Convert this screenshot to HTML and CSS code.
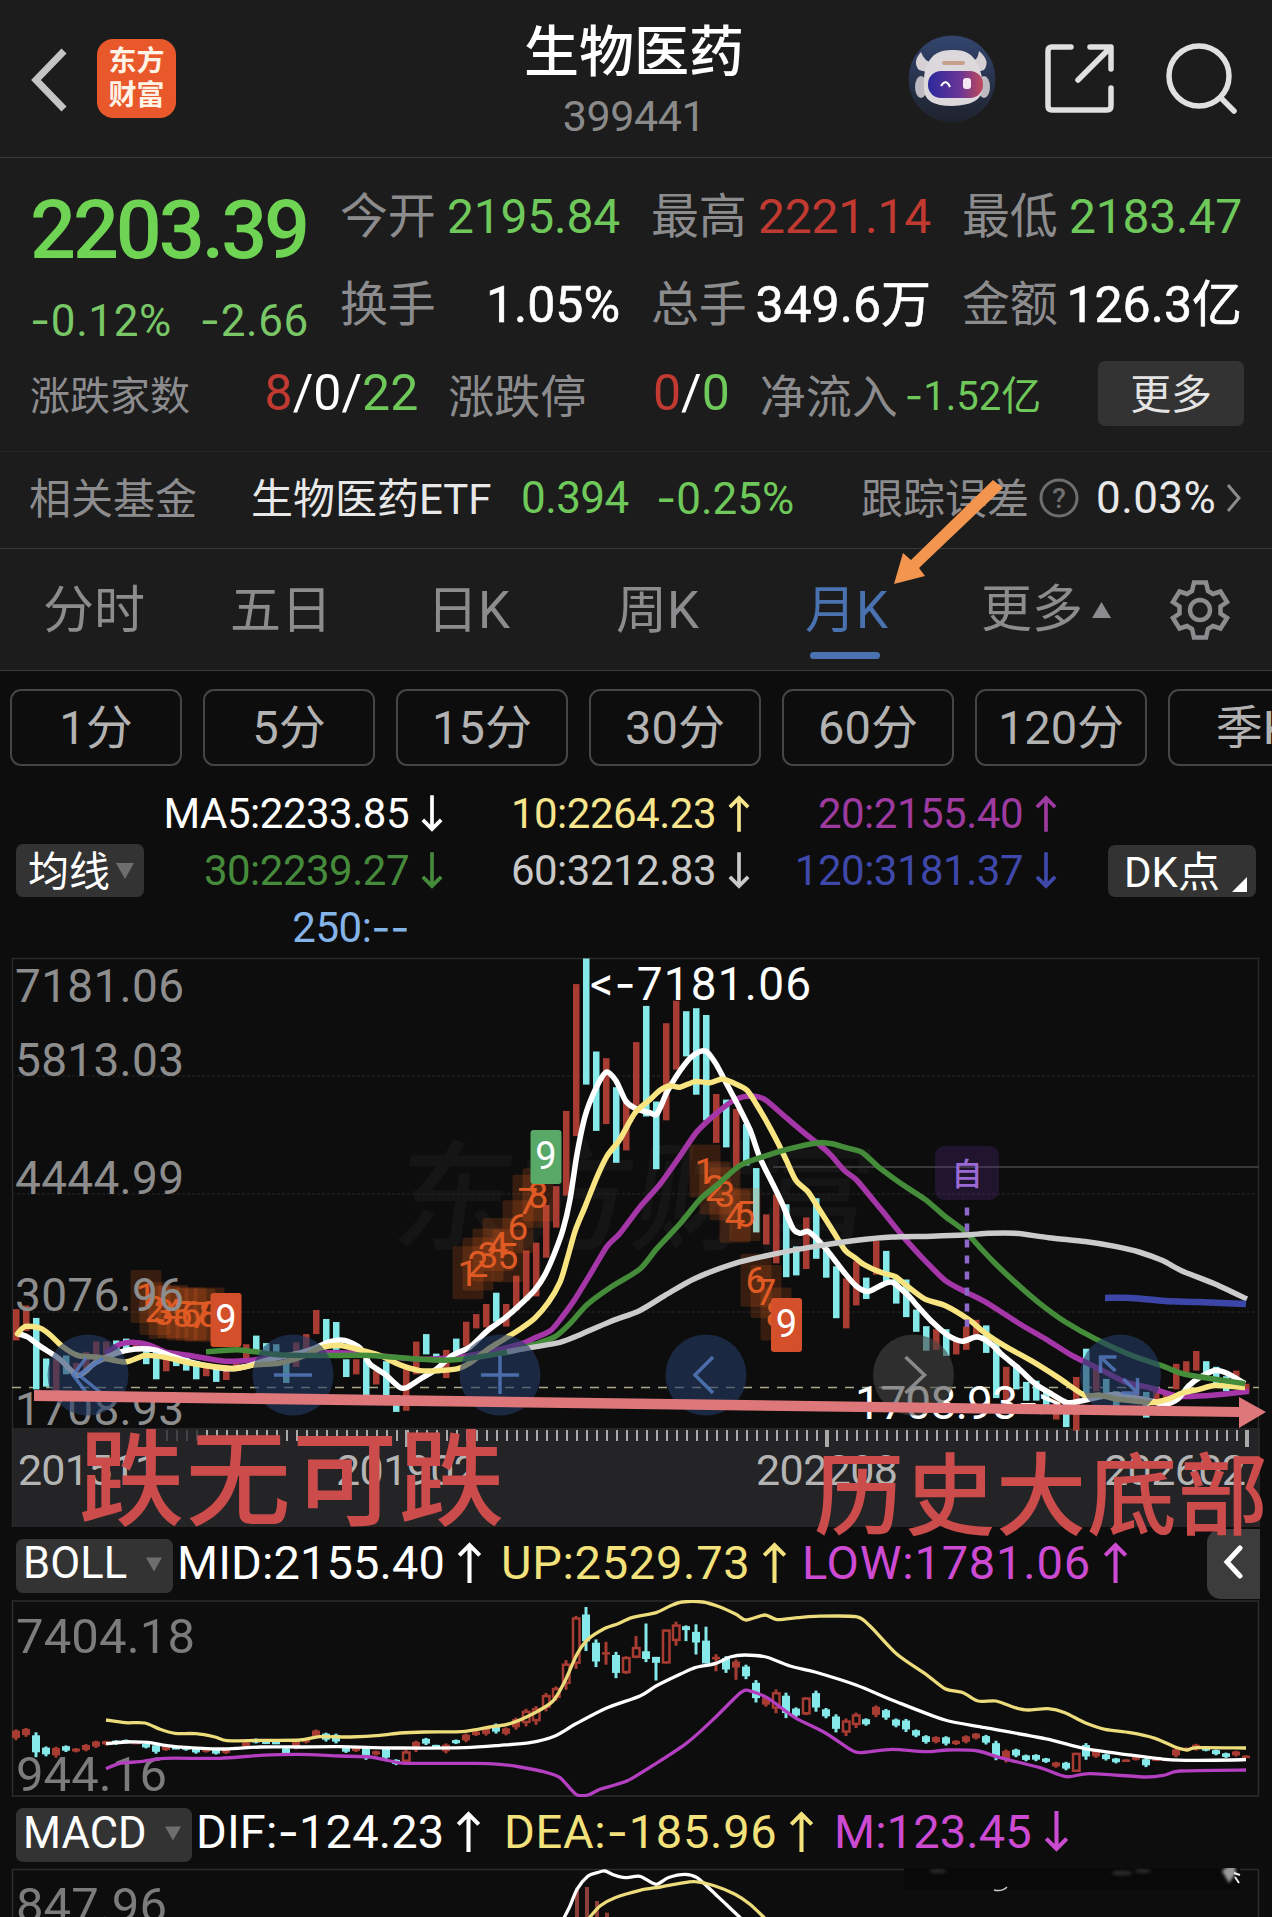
FILE: index.html
```html
<!DOCTYPE html>
<html lang="zh-CN">
<head>
  <meta charset="UTF-8" />
  <meta name="viewport" content="width=device-width, initial-scale=1.0"/>
  <title>生物医药 399441</title>
  <link rel="stylesheet" href="styles.css">
</head>
<body>
<div class="page">

  <header class="topbar">
    <svg class="back" width="40" height="68" viewBox="0 0 40 68"><path d="M36 6 L8 35 L36 64"/></svg>
    <div class="logo"><span>东方</span><span>财富</span></div>
    <div class="title">
      <h1>生物医药</h1>
      <p>399441</p>
    </div>
    <div class="tools">
      <svg class="robot" width="88" height="88" viewBox="0 0 88 88">
        <defs>
          <linearGradient id="sky" x1="0" y1="0" x2="0" y2="1"><stop offset="0" stop-color="#33456f"/><stop offset="1" stop-color="#1e222c"/></linearGradient>
          <linearGradient id="visor" x1="0" y1="0" x2="1" y2="0"><stop offset="0" stop-color="#2b2a9c"/><stop offset=".6" stop-color="#6d3596"/><stop offset="1" stop-color="#c04a58"/></linearGradient>
        </defs>
        <circle cx="44" cy="44" r="43.5" fill="url(#sky)"/>
        <path d="M13 17 Q4 27 11 35 L22 38 L28 27 Q17 29 13 17 Z M71 16 Q83 26 76 35 L66 38 L59 27 Q70 28 71 16 Z" fill="#d5d0d4"/>
        <ellipse cx="13" cy="52" rx="6" ry="11" fill="#bdb9c0"/>
        <ellipse cx="76" cy="52" rx="6" ry="11" fill="#bdb9c0"/>
        <path d="M20 28 Q26 15 44 15 Q62 14 69 28 Q75 38 74 54 Q74 70 44 71 Q16 71 16 54 Q15 36 20 28 Z" fill="#dcd8dc"/>
        <rect x="34" y="26" width="23" height="4" rx="2" fill="#c6a08c"/>
        <rect x="20" y="36" width="55" height="27" rx="13" fill="url(#visor)"/>
        <path d="M33 51 Q38 43 42 52" fill="none" stroke="#fff" stroke-width="2"/>
        <rect x="55" y="43" width="8" height="11" rx="3" fill="#f4e8f4"/>
      </svg>
      <svg class="share" width="70" height="70" viewBox="0 0 70 70"><path d="M26 3 H7 Q3 3 3 7 V62 Q3 66 7 66 H62 Q66 66 66 62 V44 M45 3 H66 V25 M65 4 L33 36"/></svg>
      <svg class="search" width="74" height="74" viewBox="0 0 74 74"><circle cx="33" cy="34" r="30"/><path d="M55 56 L68 69"/></svg>
    </div>
  </header>

  <section class="quote">
    <div class="quote-top">
      <div class="price">
        <div class="last">2203.39</div>
        <div class="change"><span><i class="dash">-</i>0.12%</span><span><i class="dash">-</i>2.66</span></div>
      </div>
      <div class="stats">
        <div class="stat"><label>今开</label><span class="down">2195.84</span></div>
        <div class="stat"><label>最高</label><span class="up">2221.14</span></div>
        <div class="stat"><label>最低</label><span class="down">2183.47</span></div>
        <div class="stat"><label>换手</label><b>1.05%</b></div>
        <div class="stat"><label>总手</label><b>349.6万</b></div>
        <div class="stat"><label>金额</label><b>126.3亿</b></div>
      </div>
    </div>
    <div class="quote-bottom">
      <div class="count wide"><label class="small">涨跌家数</label><b><i class="up">8</i>/0/<i class="down">22</i></b></div>
      <div class="count"><label>涨跌停</label><b><i class="up">0</i>/<i class="down">0</i></b></div>
      <div class="count"><label>净流入</label><span class="flow down"><i class="dash">-</i>1.52亿</span></div>
      <button class="more">更多</button>
    </div>
  </section>

  <section class="fund">
    <span class="muted">相关基金</span>
    <span class="fund-name">生物医药ETF</span>
    <span class="fund-price">0.394</span>
    <span class="fund-pct"><i class="dash">-</i>0.25%</span>
    <span class="muted track">跟踪误差</span>
    <svg class="help" width="40" height="40" viewBox="0 0 40 40"><circle cx="20" cy="20" r="18"/><text x="20" y="30" text-anchor="middle">?</text></svg>
    <span class="fund-err">0.03%</span>
    <svg class="next" width="16" height="30" viewBox="0 0 16 30"><path d="M2 2 L13 15 L2 28"/></svg>
  </section>

  <nav class="tabs">
    <a>分时</a>
    <a>五日</a>
    <a>日K</a>
    <a>周K</a>
    <a class="active">月K</a>
    <a class="tab-more">更多<svg width="19" height="16" viewBox="0 0 19 16"><path d="M9.5 0 L19 16 H0 Z"/></svg></a>
    <svg class="gear" width="60" height="60" viewBox="-30 -30 60 60"><path d="M-6 -27.5 H6 L8 -19 L13 -16 L20.5 -18.5 L27 -8 L20.5 -3.5 V3.5 L27 8 L20.5 18.5 L13 16 L8 19 L6 27.5 H-6 L-8 19 L-13 16 L-20.5 18.5 L-27 8 L-20.5 3.5 V-3.5 L-27 -8 L-20.5 -18.5 L-13 -16 L-8 -19 Z"/><circle r="10"/></svg>
  </nav>

  <div class="periods">
    <span>1分</span><span>5分</span><span>15分</span><span>30分</span><span>60分</span><span>120分</span><span>季K</span>
  </div>

  <section class="ma">
    <div class="pill ma-pill">均线<svg width="18" height="16" viewBox="0 0 18 16"><path d="M0 0 H18 L9 16 Z"/></svg></div>
    <div class="ma-grid">
      <span class="c-white">MA5:2233.85<svg class="arr"><use href="#down"/></svg></span>
      <span class="c-yellow">10:2264.23<svg class="arr"><use href="#up"/></svg></span>
      <span class="c-purple">20:2155.40<svg class="arr"><use href="#up"/></svg></span>
      <span class="c-green">30:2239.27<svg class="arr"><use href="#down"/></svg></span>
      <span class="c-grey">60:3212.83<svg class="arr"><use href="#down"/></svg></span>
      <span class="c-blue">120:3181.37<svg class="arr"><use href="#down"/></svg></span>
      <span class="c-sky">250:<i class="dash">--</i><svg class="arr"></svg></span>
    </div>
    <div class="pill dk-pill">DK点<svg width="15" height="15" viewBox="0 0 15 15"><path d="M15 0 V15 H0 Z"/></svg></div>
  </section>

  <svg class="kline" id="kline" width="1272" height="576" viewBox="0 950 1272 576"></svg>

  <section class="indicator">
    <div class="pill ind-pill boll">BOLL<svg width="16" height="15" viewBox="0 0 18 16"><path d="M0 0 H18 L9 16 Z"/></svg></div>
    <span class="c-white mid">MID:2155.40<svg class="arr"><use href="#up"/></svg></span>
    <span class="c-yellow2 upv">UP:2529.73<svg class="arr"><use href="#up"/></svg></span>
    <span class="c-pink low">LOW:1781.06<svg class="arr"><use href="#up"/></svg></span>
    <div class="drawer"><svg width="22" height="34" viewBox="0 0 22 34"><path d="M18 3 L5 17 L18 31"/></svg></div>
  </section>

  <svg class="boll-chart" id="boll" width="1272" height="197" viewBox="0 1599 1272 197"></svg>

  <section class="indicator macd-row">
    <div class="pill ind-pill macd">MACD<svg width="16" height="15" viewBox="0 0 18 16"><path d="M0 0 H18 L9 16 Z"/></svg></div>
    <span class="c-white dif">DIF:<i class="dash">-</i>124.23<svg class="arr"><use href="#up"/></svg></span>
    <span class="c-yellow2 dea">DEA:<i class="dash">-</i>185.96<svg class="arr"><use href="#up"/></svg></span>
    <span class="c-pink mval">M:123.45<svg class="arr"><use href="#down"/></svg></span>
  </section>

  <svg class="macd-chart" id="macd" width="1272" height="50" viewBox="0 1867 1272 50"></svg>

  <!-- hand drawn notes over the page -->
  <svg class="notes" width="1272" height="1917" viewBox="0 0 1272 1917">
    <path fill="#f3954e" d="M993 480 L1003 488 L919 568 L925 576 L894 584 L903 553 L911 560 Z"/>
    <path fill="#dd777a" d="M34 1390 L1239 1407 V1397 L1266 1412 L1239 1428 V1417 L34 1401 Z"/>
    <text class="note" x="79" y="1517" font-size="105" textLength="425">跌无可跌</text>
    <text class="note" x="814" y="1528" font-size="90" textLength="454">历史大底部</text>
  </svg>
</div>

<svg width="0" height="0" class="defs">
  <symbol id="up" viewBox="0 0 24 40"><path d="M12 40 V3 M2 13 L12 3 L22 13"/></symbol>
  <symbol id="down" viewBox="0 0 24 40"><path d="M12 0 V37 M2 27 L12 37 L22 27"/></symbol>
</svg>

<script src="chart.js"></script>
</body>
</html>
```
FILE: styles.css
```css
* {
  box-sizing: border-box;
}

body {
  margin: 0;
  background: #0d0d0d;
  color: #fff;
  font-family: Roboto, "Noto Sans CJK SC", sans-serif;
}

h1, p {
  margin: 0;
}

i {
  font-style: normal;
}

b {
  font-weight: 500;
}

svg {
  flex: none;
  display: block;
}

/* wider minus sign */
.dash {
  font-family: Inter, sans-serif;
}

.page {
  position: relative;
  width: 1272px;
  height: 1917px;
  overflow: hidden;
}

.defs {
  position: absolute;
}

/* header */
.topbar {
  display: flex;
  align-items: center;
  height: 158px;
  padding: 0 32px 0 28px;
  background: #1c1c1c;
  border-bottom: 1px solid #383838;
}

.back path {
  fill: none;
  stroke: #c4c4c4;
  stroke-width: 7;
}

.logo {
  display: flex;
  flex-direction: column;
  justify-content: center;
  align-items: center;
  width: 79px;
  height: 79px;
  margin-left: 29px;
  border-radius: 16px;
  background: #e8582a;
  color: #fff3e8;
  font-size: 28px;
  font-weight: 700;
  line-height: 34px;
}

.title {
  flex: 1;
  margin-left: 184px;
  padding-top: 10px;
  text-align: center;
}

.title h1 {
  font-size: 55px;
  font-weight: 500;
  line-height: 76px;
}

.title p {
  color: #8a8a8a;
  font-size: 43px;
  line-height: 52px;
  letter-spacing: -.4px;
  margin-bottom: 12px;
}

.tools {
  display: flex;
  align-items: center;
}

.share {
  margin-left: 49px;
}

.search {
  margin-left: 51px;
}

.share path, .search path, .search circle {
  fill: none;
  stroke: #e0e0e0;
  stroke-width: 5.5;
  stroke-linecap: round;
  stroke-linejoin: round;
}

/* quote */
.quote {
  height: 293px;
  padding: 15px 28px 0 30px;
  background: #1c1c1c;
}

.quote-top {
  display: flex;
  height: 176px;
}

.price {
  width: 310px;
  padding-top: 13px;
}

.last {
  color: #6fd354;
  font-size: 81px;
  font-weight: 500;
  line-height: 90px;
  letter-spacing: -3.1px;
}

.change {
  display: flex;
  gap: 28px;
  color: #79c766;
  font-size: 44px;
  line-height: 88px;
  letter-spacing: .6px;
}

.stats {
  display: grid;
  grid-template-columns: 280px 280px 280px;
  grid-auto-rows: 88px;
  align-content: start;
  column-gap: 31px;
}

.stat {
  display: flex;
  justify-content: space-between;
  line-height: 88px;
  font-size: 48px;
  letter-spacing: -.2px;
  white-space: nowrap;
}

.stat b {
  font-size: 50px;
  font-weight: 400;
  letter-spacing: 0;
  -webkit-text-stroke: .6px #fff;
}

label, .muted {
  color: #8c8c8f;
}

.up {
  color: #c13a31;
}

.down {
  color: #6fc95a;
}

.quote-bottom {
  display: flex;
  align-items: center;
  height: 88px;
}

.count {
  display: flex;
  justify-content: space-between;
  align-items: center;
  width: 282px;
  margin-left: 30px;
  font-size: 46px;
}

.count.wide {
  width: 389px;
  margin-left: 0;
}

.count b {
  font-size: 50px;
  font-weight: 400;
}

label.small, .flow {
  font-size: 40px;
}

.more {
  width: 146px;
  height: 65px;
  margin-left: 57px;
  padding: 0 0 6px;
  border: 0;
  border-radius: 7px;
  background: #333;
  color: #e4e4e4;
  font: 41px Roboto, "Noto Sans CJK SC", sans-serif;
}

/* related fund */
.fund {
  display: flex;
  align-items: center;
  height: 98px;
  padding-left: 29px;
  padding-bottom: 5px;
  background: #1c1c1c;
  border-top: 1px solid #242424;
  border-bottom: 1px solid #383838;
  font-size: 42px;
  white-space: nowrap;
}

.muted, .fund-name {
  margin-bottom: 5px;
}

.fund-name {
  width: 243px;
  margin-left: 54px;
  color: #e8e8e8;
}

.fund-price, .fund-pct {
  margin-left: 27px;
  color: #6fc95a;
  font-size: 44px;
}

.fund-price {
  width: 108px;
  letter-spacing: -.6px;
}

.fund-pct {
  width: 140px;
}

.track {
  margin-left: 65px;
}

.help {
  margin-left: 10px;
}

.help circle {
  fill: none;
  stroke: #6e6e6e;
  stroke-width: 3;
}

.help text {
  fill: #6e6e6e;
  font-size: 28px;
  font-weight: 500;
}

.fund-err {
  margin-left: 17px;
  width: 122px;
  color: #e8e8e8;
  font-size: 44px;
  letter-spacing: .4px;
}

.next {
  margin-left: 8px;
}

.next path {
  fill: none;
  stroke: #8c8c8c;
  stroke-width: 3;
}

/* chart type tabs */
.tabs {
  display: flex;
  height: 122px;
  padding-left: 43px;
  background: #1c1c1c;
  border-bottom: 1px solid #383838;
  color: #8c8c8f;
  font-size: 51px;
  line-height: 124px;
}

.tabs a {
  position: relative;
  width: 86px;
  height: 121px;
  margin-right: 103px;
  white-space: nowrap;
}

.tabs a:first-child {
  width: 102px;
  margin-right: 85px;
}

.tabs a:nth-child(2) {
  width: 102px;
  margin-right: 95px;
}

.tabs .active {
  color: #4a72b0;
  margin-right: 90px;
}

.tabs .active::after {
  content: "";
  position: absolute;
  left: 5px;
  bottom: 11px;
  width: 70px;
  height: 7px;
  border-radius: 4px;
  background: #4a72b0;
}

.tabs .tab-more {
  display: flex;
  align-items: center;
  width: 130px;
  margin-right: 59px;
}

.tab-more svg {
  margin-left: 9px;
  fill: #8c8c8f;
}

.gear {
  margin-top: 31px;
}

.gear path, .gear circle {
  fill: none;
  stroke: #8c8c8f;
  stroke-width: 4.5;
}

/* minute periods */
.periods {
  display: flex;
  gap: 21px;
  width: 1272px;
  padding: 18px 0 0 10px;
  overflow: hidden;
}

.periods span {
  flex: none;
  width: 172px;
  height: 77px;
  border: 2px solid #454545;
  border-radius: 11px;
  color: #b2b2b2;
  font-size: 47px;
  line-height: 73px;
  text-align: center;
}

/* moving averages */
.pill {
  display: flex;
  align-items: center;
  border-radius: 7px;
  background: #333;
}

.pill svg {
  fill: #6e6e6e;
}

.ma {
  display: flex;
  height: 185px;
  padding: 19px 15px 0 16px;
}

.ma-pill {
  width: 128px;
  height: 53px;
  margin-top: 59px;
  padding-left: 12px;
  padding-bottom: 5px;
  font-size: 41px;
}

.ma-pill svg {
  margin: 6px 0 0 6px;
}

.ma-grid {
  display: grid;
  grid-template-columns: 299px 307px 307px;
  grid-auto-rows: 57px;
  width: 965px;
}

.ma-grid span {
  display: flex;
  justify-content: flex-end;
  align-items: center;
  font-size: 42px;
  letter-spacing: -.5px;
}

.arr {
  width: 22px;
  height: 37px;
  margin-left: 12px;
  fill: none;
  stroke: currentColor;
  stroke-width: 4;
}

.dk-pill {
  width: 148px;
  height: 52px;
  margin-top: 60px;
  margin-left: -1px;
  padding-left: 16px;
  padding-bottom: 6px;
  font-size: 42px;
}

.dk-pill svg {
  margin: 32px 0 0 12px;
  fill: #fff;
}

.c-white { color: #fff; }
.c-yellow { color: #f6e58c; }
.c-yellow2 { color: #f3e27c; }
.c-purple { color: #9c3a9f; }
.c-green { color: #468a3c; }
.c-grey { color: #c9c9c9; }
.c-blue { color: #3f48ab; }
.c-sky { color: #84b4e8; }
.c-pink { color: #cd4bd3; }

/* indicator rows */
.indicator {
  display: flex;
  align-items: center;
  height: 73px;
  padding-left: 16px;
  font-size: 47px;
  line-height: 54px;
  letter-spacing: .1px;
  white-space: nowrap;
}

.indicator > span {
  display: flex;
  align-items: center;
  margin-bottom: 2px;
}

.indicator .arr {
  width: 25px;
  height: 41px;
}

.ind-pill {
  justify-content: space-between;
  height: 54px;
  padding: 0 11px 3px 7px;
  font-size: 43.5px;
  margin-top: 4px;
}

.boll { width: 157px; }
.macd { width: 176px; }
.mid { width: 324px; margin-left: 4px; }
.upv { width: 301px; letter-spacing: .7px; }
.low { width: 324px; letter-spacing: .8px; }
.dif { width: 308px; margin-left: 4px; }
.dea { width: 330px; letter-spacing: .7px; }
.mval { width: 240px; }

.macd-row {
  height: 71px;
}

.macd-row .pill {
  margin-top: 5px;
}

.drawer {
  display: flex;
  align-items: center;
  width: 53px;
  height: 70px;
  margin-left: auto;
  margin-right: 12px;
  padding-left: 15px;
  padding-bottom: 4px;
  border-radius: 14px 0 0 14px;
  background: #3c3c3c;
}

.drawer path {
  fill: none;
  stroke: #fff;
  stroke-width: 5;
  stroke-linecap: round;
}

/* annotations lie over everything */
.notes {
  position: absolute;
  left: 0;
  top: 0;
}

.note {
  fill: #cc4c4c;
  font-family: "Noto Sans CJK SC", sans-serif;
  font-weight: 500;
}
```
FILE: chart.js
```js
// Monthly candles: colour (r = up, c = down), high, low, in chart units below the top of the plot
const candles = `r952-1035 r942-1010 c975-1165 c1083-1158 r1085-1168 c1075-1125 r1095-1128 r1065-1120 r1038-1095 r1038-1075
c1035-1070 c1030-1060 r1045-1065 c1060-1098 c1065-1138 r1080-1117 c1085-1103 c1080-1115 c1090-1138 r1095-1130
c1105-1145 r1100-1140 r1085-1110 r1045-1095 c1022-1060 c1042-1065 c1045-1065 c1090-1148 r1040-1105 r1018-1060
r954-1018 c978-1045 c986-1060 c1085-1132 r1085-1125 c1085-1185 r1115-1152 c1090-1188 c1180-1225 r1108-1222
r1038-1125 c1018-1072 c1070-1080 r1060-1135 c1030-1065 r985-1050 r965-1003 r938-1000 c908-985 r938-998
r863-955 r796-930 r775-918 r675-815 r625-735 r425-650 r88-492 c20-355 c267-478 r285-460
c362-563 r395-530 r242-410 c146-440 c400-580 r192-450 r132-315 c160-280 c152-382 c170-450
r380-510 c395-522 r420-575 c460-570 c577-748 r700-780 r648-830 c673-867 c785-862 r708-845
c657-818 c790-868 c838-976 r870-1003 r825-942 c868-925 r770-860 c797-880 c870-937 c873-973
c953-1012 c997-1062 r1005-1060 c1005-1076 r1035-1072 r998-1060 r980-1030 c995-1068 c1040-1188 r1105-1205
c1100-1165 c1145-1195 c1142-1195 c1170-1208 r1200-1245 c1200-1265 r1132-1275 c1057-1185 r1110-1170 c1137-1190
c1170-1212 r1180-1200 r1160-1190 c1172-1240 r1170-1195 r1170-1195 r1097-1165 r1090-1120 r1063-1115 c1090-1120
c1105-1150 c1130-1170 r1115-1160 r1150-1172`.split(/\s+/).map(s => {
  const [high, low] = s.slice(1).split("-").map(Number);
  return { up: s[0] === "r", high, low };
});

const RED = "#a83c33";
const CYAN = "#86e9e9";

const mainY = v => 950 + v * 0.3763;
const subY = v => 1520 + v / 3;
const candleX = i => 16 + i * 10;
const r1 = n => Math.round(n * 10) / 10;

// smooth curve through "x,v x,v ..." pairs
function curve(data, toY, color, width) {
  const p = data.trim().split(/\s+/).map(s => {
    const [x, v] = s.split(",").map(Number);
    return [x, toY(v)];
  });
  let d = `M${p[0][0]} ${r1(p[0][1])}`;
  for (let i = 0; i < p.length - 1; i++) {
    const a = p[i - 1] || p[i], b = p[i], c = p[i + 1], e = p[i + 2] || c;
    const t = 0.13;
    d += ` C${r1(b[0] + (c[0] - a[0]) * t)} ${r1(b[1] + (c[1] - a[1]) * t)} ${r1(c[0] - (e[0] - b[0]) * t)} ${r1(c[1] - (e[1] - b[1]) * t)} ${c[0]} ${r1(c[1])}`;
  }
  return `<path d="${d}" fill="none" stroke="${color}" stroke-width="${width}"/>`;
}

function line(x1, y1, x2, y2, color, width, extra = "") {
  return `<line x1="${x1}" y1="${y1}" x2="${x2}" y2="${y2}" stroke="${color}" stroke-width="${width}" ${extra}/>`;
}

function rect(x, y, w, h, fill, extra = "") {
  return `<rect x="${x}" y="${y}" width="${w}" height="${h}" fill="${fill}" ${extra}/>`;
}

function text(str, x, y, size, fill, length, extra = "") {
  const fit = length ? `textLength="${length}"` : "";
  return `<text x="${x}" y="${y}" font-size="${size}" fill="${fill}" ${fit} ${extra}>${str}</text>`;
}

// ---------- main chart ----------
let k = "";
k += text("东方财富", 396, 1240, 120, "#151515", 478, 'font-weight="500" transform="skewX(-8) translate(168 0)"');
k += rect(12, 1427, 1248, 99, "#242426");
k += `<rect x="12.5" y="957.5" width="1246" height="569" fill="none" stroke="#2a2a2a" stroke-width="1.5"/>`;
[1075, 1193, 1311].forEach(y => k += line(12, y, 1259, y, "#1f1f1f", 1.5, 'stroke-dasharray="3 2"'));
k += line(773, 1166, 1259, 1166, "#383838", 2);
k += line(12, 1386.5, 1259, 1386.5, "#aaa78c", 1.3, 'stroke-dasharray="9 8"');

candles.forEach((c, i) => {
  k += rect(candleX(i) - 3, r1(mainY(c.high)), 6.5, r1((c.low - c.high) * 0.3763), c.up ? RED : CYAN);
});

// ruler under the plot
for (let i = 0; i < 109; i++) {
  const major = i === 0 || i === 42 || i === 84;
  const x = 1247 - i * 10;
  k += line(x, 1429, x, major ? 1446 : 1440, i > 104 ? "#444" : "#a9a9a9", major ? 4 : 2);
}

// nine-count markers
function count(n, x, v) {
  const y = mainY(v);
  k += rect(x - 15.5, r1(y - 26.5), 31, 53, "#e2601c", 'opacity=".2" rx="2"');
  k += text(n, x, r1(y + 13), 37, "#e05a26", 0, 'text-anchor="middle"');
}
function nine(x, y, fill) {
  k += rect(x, y, 31, 54, fill, 'rx="3"');
  k += text("9", x + 15.5, y + 39, 38, "#fff", 0, 'text-anchor="middle"');
}
[918, 950, 960, 958, 965, 965, 968, 965].forEach((v, i) => count(i + 1, 146 + i * 9, v));
[855, 832, 808, 780, 810, 733, 665, 648].forEach((v, i) => count(i + 1, 468 + i * 10, v));
[585, 630, 645, 705, 700].forEach((v, i) => count(i + 1, 705 + i * 10, v));
[875, 905, 965].forEach((v, i) => count(i + 6, 756 + i * 10, v));

k += curve("105,1070 120,1045 135,1040 150,1048 165,1065 190,1075 225,1090 260,1085 290,1075 320,1068 360,1070 420,1085 470,1075 520,1045 535,1028 550,1010 560,980 575,925 590,860 607,785 620,750 640,680 660,620 680,545 697,480 717,430 735,395 752,385 765,395 785,440 805,485 817,510 830,540 845,585 857,610 882,690 905,765 924,820 945,875 965,905 987,935 1019,990 1045,1030 1072,1075 1099,1110 1125,1145 1149,1160 1179,1183 1215,1180 1249,1170", mainY, "#a536a8", 5.5);
k += curve("16,1015 27,1025 40,1050 60,1085 78,1128 95,1095 115,1070 135,1058 155,1060 170,1075 190,1092 225,1110 245,1105 270,1085 300,1068 315,1055 330,1038 345,1035 360,1055 370,1098 385,1125 400,1160 407,1160 420,1138 437,1110 452,1075 470,1052 487,1010 505,975 520,940 535,900 545,860 555,800 563,740 570,660 577,540 585,440 595,370 606,322 616,345 626,400 637,420 650,430 657,433 667,375 677,330 690,285 700,267 707,268 716,300 726,350 738,410 750,475 760,550 773,620 782,670 793,738 800,750 808,745 817,765 830,805 843,850 856,890 868,905 880,890 892,880 908,915 918,945 932,985 947,1020 962,1037 977,1025 989,1040 1003,1075 1019,1110 1035,1150 1052,1178 1067,1200 1082,1195 1100,1185 1115,1178 1130,1185 1150,1195 1165,1205 1178,1190 1189,1155 1202,1130 1215,1115 1227,1122 1245,1150", mainY, "#fff", 5.5);
k += curve("16,1022 25,998 40,1002 50,1020 62,1050 78,1075 100,1080 125,1092 145,1075 165,1080 190,1095 215,1105 235,1110 255,1100 280,1095 305,1075 320,1055 340,1048 360,1060 380,1075 400,1100 420,1115 440,1115 458,1110 470,1095 487,1060 505,1030 520,1005 535,975 548,935 560,880 567,820 575,745 585,680 597,600 607,545 620,500 635,430 650,395 660,370 670,358 680,362 695,347 710,350 722,340 733,350 747,370 757,410 768,460 778,510 787,560 796,610 808,640 820,690 832,740 845,795 855,815 865,835 882,855 895,865 907,890 925,925 945,942 969,980 985,1015 1005,1050 1032,1090 1059,1135 1084,1180 1099,1180 1115,1190 1132,1195 1152,1200 1169,1190 1182,1175 1199,1165 1215,1155 1245,1160", mainY, "#f8e481", 5.5);
k += curve("206,1065 240,1060 275,1072 320,1075 370,1075 420,1085 450,1087 480,1078 510,1065 535,1045 555,1025 570,990 587,940 610,895 640,845 657,790 680,725 700,660 718,620 740,570 765,545 790,525 817,510 832,512 845,522 862,535 879,575 902,620 925,660 945,705 965,745 979,785 995,830 1015,880 1039,935 1065,985 1095,1030 1132,1075 1165,1105 1185,1125 1245,1150", mainY, "#458c3a", 5.5);
k += curve("507,1065 535,1052 560,1040 580,1020 610,985 640,955 665,915 695,870 735,830 775,805 815,785 859,768 892,760 932,758 965,755 989,750 1015,750 1049,762 1085,772 1115,785 1139,800 1162,822 1182,850 1215,885 1247,925", mainY, "#cbcbcb", 5.5);
k += curve("1105,922 1132,922 1165,930 1199,933 1246,938", mainY, "#3b46a8", 6.5);

// purple event marker
k += rect(935, 1145, 64, 54, "#5a2d92", 'opacity=".25" rx="9"');
k += text("自", 967, 1184, 31, "#9a6ad4", 0, 'text-anchor="middle" font-weight="500"');
k += line(967, 1206.5, 967, 1326, "#8e67cb", 4.5, 'stroke-dasharray="8 8"');

nine(210.5, 1292, "#d3502b");
nine(530.5, 1129, "#58a868");
nine(771, 1297, "#d3502b");

const dash = '<tspan class="dash">-</tspan>';
k += text(`1708.93${dash}&gt;`, 855, 1418, 46, "#fff", 207);

// price scale
[["7181.06", 1001], ["5813.03", 1075], ["4444.99", 1193], ["3076.96", 1310], ["1708.93", 1424]]
  .forEach(([s, y]) => k += text(s, 15, y, 46, "#8d8d8d", 169));
k += text(`&lt;${dash}7181.06`, 590, 999, 46, "#fff", 221);

k += text("201511", 18, 1484, 43, "#b4b4b4", 141);
k += text("201902", 336, 1484, 43, "#b4b4b4", 142);
k += text("202208", 756, 1484, 43, "#b4b4b4", 142);
k += text("202602", 1104, 1484, 43, "#b4b4b4", 142);

// round buttons
function round(x, fill, stroke, d) {
  k += `<circle cx="${x}" cy="1374" r="40.5" fill="${fill}" opacity=".6"/>`;
  k += `<path d="${d}" transform="translate(${x} 1374)" fill="none" stroke="${stroke}" stroke-width="3.5" opacity=".85"/>`;
}
round(88, "#233a64", "#5379bd", "M-2 -17 L-15 0 L-2 17 M15 -17 L-9 0 L12 17");
round(293, "#233a64", "#5379bd", "M-19 0 H19");
round(500, "#233a64", "#5379bd", "M-19 0 H19 M0 -19 V19");
round(706, "#233a64", "#5379bd", "M7 -18 L-11 0 L7 18");
round(913.5, "#444", "#999", "M-8 -18 L11 0 L-8 18");
round(1120.5, "#233a64", "#5379bd", "M-4 -18 H-20 V-2 M-20 -18 L-5 -4 M17 3 V18 H1 M17 18 L3 4");
document.getElementById("kline").innerHTML = k;

// ---------- BOLL ----------
let b = `<rect x="12.5" y="1600" width="1246" height="195" fill="none" stroke="#2c2c2c" stroke-width="1.5"/>`;
b += text("7404.18", 16, 1652, 49, "#7c7c7c", 179);
b += text("944.16", 16, 1790, 49, "#7c7c7c", 151);

// body position inside the high-low range, where it differs from the usual
const bodies = { 56: [.03, .9], 57: [.17, .78], 59: [.45, .55], 61: [.05, .95], 62: [.5, .98], 63: [.72, .92], 64: [0, .25], 65: [0, 1], 67: [.05, .3], 68: [.25, .6], 69: [.38, 1], 70: [.15, .3], 72: [.1, .4], 79: [.02, .95], 106: [0, 1] };
candles.forEach((c, i) => {
  const top = subY(258 + (c.high - 20) * 0.3936);
  const bottom = subY(258 + (c.low - 20) * 0.3936);
  const h = bottom - top;
  const [from, to] = bodies[i] || [.12, .8];
  const x = candleX(i);
  const y1 = r1(top + h * from), bh = Math.max(2.5, r1(h * (to - from)));
  b += line(x, r1(top), x, r1(bottom), c.up ? RED : CYAN, 3);
  if (c.up && bh > 9) {
    b += `<rect x="${x - 3}" y="${y1 + 1}" width="6.5" height="${bh - 2}" fill="#0d0d0d" stroke="${RED}" stroke-width="2.5"/>`;
  } else {
    b += rect(x - 4, y1, 8, bh, c.up ? RED : CYAN);
  }
});
b += curve("106,597 125,605 145,606 160,625 175,637 196,638 215,648 227,659 260,658 300,657 320,647 350,648 380,643 400,636 425,633 465,631 490,618 510,608 535,575 553,540 565,480 577,400 588,355 605,322 618,308 632,290 656,275 670,255 682,243 703,243 720,258 736,280 746,297 765,282 777,296 798,290 815,286 856,287 870,315 897,400 926,460 945,503 963,515 978,540 996,540 1015,560 1028,567 1048,563 1065,575 1085,605 1105,625 1130,635 1155,652 1175,678 1187,687 1197,680 1246,681", subY, "#eddc7c", 3.3);
b += curve("106,668 125,663 148,664 165,673 190,680 225,684 260,678 300,678 340,677 400,681 465,680 500,673 530,665 555,645 575,610 605,563 640,525 656,495 680,460 695,440 715,428 730,408 745,402 766,408 790,435 815,453 856,492 897,543 945,597 985,620 1045,653 1085,683 1130,702 1165,715 1195,718 1246,716", subY, "#fff", 3.3);
b += curve("106,743 120,727 140,722 165,712 220,712 260,703 300,700 340,705 370,708 388,718 405,727 475,727 500,730 520,738 545,753 560,770 576,820 588,822 600,805 617,790 632,772 685,670 715,590 735,530 742,512 748,508 767,530 795,590 825,635 850,685 860,695 892,685 925,692 948,687 978,690 1000,710 1040,740 1066,767 1090,758 1145,768 1165,762 1180,750 1246,747", subY, "#b43fc0", 3.3);
document.getElementById("boll").innerHTML = b;

// ---------- MACD ----------
let m = `<rect x="12.5" y="1868.5" width="1246" height="100" fill="none" stroke="#2c2c2c" stroke-width="1.5"/>`;
m += text("847.96", 16, 1921, 49, "#7c7c7c", 151);
[[577, 1100], [587, 1098], [597, 1140], [607, 1175]].forEach(([x, v]) => m += rect(x - 2, subY(v), 4, 60, "#8c3f38"));
m += curve("564,1191 570,1155 577,1105 588,1065 597,1055 605,1050 614,1062 625,1070 640,1066 656,1090 668,1070 685,1060 697,1070 712,1110 726,1150 742,1195", subY, "#fff", 3.3);
m += curve("588,1195 600,1155 615,1130 640,1108 660,1098 680,1087 695,1082 715,1095 735,1120 750,1150 766,1195", subY, "#eddc7c", 3.3);
// smudged corner caption
m += `<defs><filter id="soft"><feGaussianBlur stdDeviation="1.6"/></filter></defs>`;
m += rect(904, 1860, 336, 28, "#090909");
m += `<g filter="url(#soft)"><ellipse cx="938" cy="1870" rx="9" ry="2" fill="#2a2a2a"/><ellipse cx="1122" cy="1872" rx="10" ry="2.5" fill="#2c2c2c"/><ellipse cx="1143" cy="1870" rx="8" ry="2" fill="#2c2c2c"/><path d="M1222 1870 L1234 1860 L1236 1872 L1229 1882 Z" fill="#999"/></g>`;
m += `<path d="M994 1889 Q1002 1891 1007 1886" fill="none" stroke="#ccc" stroke-width="1.5"/>`;
m += `<path d="M1240 1859 L1234 1861 L1236 1866 M1234 1872 L1240 1874 M1235 1876 L1239 1882" fill="none" stroke="#f0f0f0" stroke-width="2"/>`;
document.getElementById("macd").innerHTML = m;
```
